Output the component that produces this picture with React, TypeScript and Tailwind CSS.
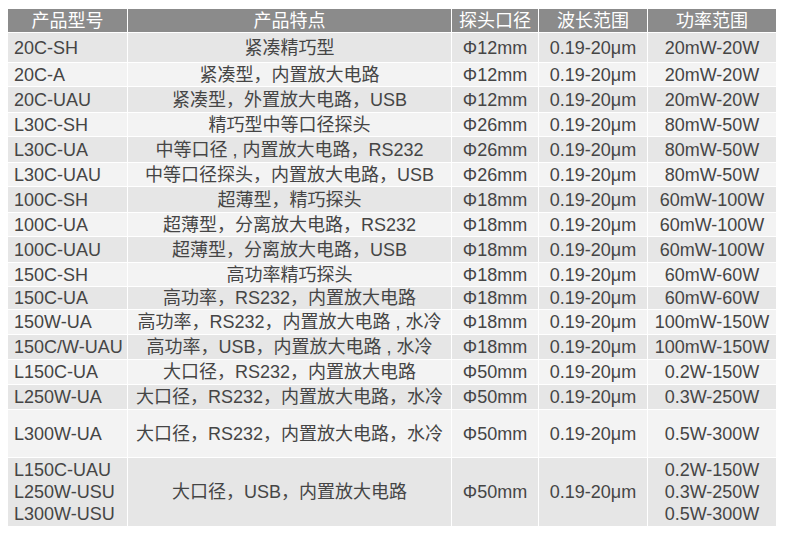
const headers = ['产品型号', '产品特点', '探头口径', '波长范围', '功率范围'];

type Row = {
  model: string[];
  feature: string;
  probe: string;
  wave: string;
  power: string[];
  h: string;
};

const rows: Row[] = [
  { model: ['20C-SH'], feature: '紧凑精巧型', probe: 'Φ12mm', wave: '0.19-20μm', power: ['20mW-20W'], h: 'h-[29px]' },
  { model: ['20C-A'], feature: '紧凑型，内置放大电路', probe: 'Φ12mm', wave: '0.19-20μm', power: ['20mW-20W'], h: 'h-[23px]' },
  { model: ['20C-UAU'], feature: '紧凑型，外置放大电路，USB', probe: 'Φ12mm', wave: '0.19-20μm', power: ['20mW-20W'], h: 'h-[25px]' },
  { model: ['L30C-SH'], feature: '精巧型中等口径探头', probe: 'Φ26mm', wave: '0.19-20μm', power: ['80mW-50W'], h: 'h-[23px]' },
  { model: ['L30C-UA'], feature: '中等口径 , 内置放大电路，RS232', probe: 'Φ26mm', wave: '0.19-20μm', power: ['80mW-50W'], h: 'h-[25px]' },
  { model: ['L30C-UAU'], feature: '中等口径探头，内置放大电路，USB', probe: 'Φ26mm', wave: '0.19-20μm', power: ['80mW-50W'], h: 'h-[23px]' },
  { model: ['100C-SH'], feature: '超薄型，精巧探头', probe: 'Φ18mm', wave: '0.19-20μm', power: ['60mW-100W'], h: 'h-[25px]' },
  { model: ['100C-UA'], feature: '超薄型，分离放大电路，RS232', probe: 'Φ18mm', wave: '0.19-20μm', power: ['60mW-100W'], h: 'h-[23px]' },
  { model: ['100C-UAU'], feature: '超薄型，分离放大电路，USB', probe: 'Φ18mm', wave: '0.19-20μm', power: ['60mW-100W'], h: 'h-[25px]' },
  { model: ['150C-SH'], feature: '高功率精巧探头', probe: 'Φ18mm', wave: '0.19-20μm', power: ['60mW-60W'], h: 'h-[23px]' },
  { model: ['150C-UA'], feature: '高功率，RS232，内置放大电路', probe: 'Φ18mm', wave: '0.19-20μm', power: ['60mW-60W'], h: 'h-[22px]' },
  { model: ['150W-UA'], feature: '高功率，RS232，内置放大电路 , 水冷', probe: 'Φ18mm', wave: '0.19-20μm', power: ['100mW-150W'], h: 'h-[24px]' },
  { model: ['150C/W-UAU'], feature: '高功率，USB，内置放大电路 , 水冷', probe: 'Φ18mm', wave: '0.19-20μm', power: ['100mW-150W'], h: 'h-[24px]' },
  { model: ['L150C-UA'], feature: '大口径，RS232，内置放大电路', probe: 'Φ50mm', wave: '0.19-20μm', power: ['0.2W-150W'], h: 'h-[24px]' },
  { model: ['L250W-UA'], feature: '大口径，RS232，内置放大电路，水冷', probe: 'Φ50mm', wave: '0.19-20μm', power: ['0.3W-250W'], h: 'h-[24px]' },
  { model: ['L300W-UA'], feature: '大口径，RS232，内置放大电路，水冷', probe: 'Φ50mm', wave: '0.19-20μm', power: ['0.5W-300W'], h: 'h-[47px]' },
  {
    model: ['L150C-UAU', 'L250W-USU', 'L300W-USU'],
    feature: '大口径，USB，内置放大电路',
    probe: 'Φ50mm',
    wave: '0.19-20μm',
    power: ['0.2W-150W', '0.3W-250W', '0.5W-300W'],
    h: 'h-[68px]',
  },
];

const widths = ['w-[119px]', 'w-[323px]', 'w-[86px]', 'w-[108px]', 'w-[128px]'];

export default function App() {
  return (
    <div
      className="min-h-[535px] w-[786px] bg-white pl-2 pt-[9px]"
      style={{ fontFamily: '"Liberation Sans", "Noto Sans CJK SC", sans-serif' }}
    >
      <div className="flex w-[768px] flex-col gap-px text-[18px] text-[#454545]">
        {/* Header */}
        <div className="flex h-[23px] gap-px">
          {headers.map((t, i) => (
            <div
              key={t}
              className={`${widths[i]} flex items-center justify-center bg-[#8b8b8b] leading-none text-white`}
            >
              {t}
            </div>
          ))}
        </div>

        {rows.map((r, idx) => {
          const bg = idx % 2 === 0 ? 'bg-[#e6e6e6]' : 'bg-[#f3f3f3]';
          return (
            <div key={r.model.join()} className={`flex ${r.h} gap-px`}>
              <div className={`${widths[0]} ${bg} flex flex-col justify-center pl-1.5 leading-[22px]`}>
                {r.model.map((m) => (
                  <span key={m}>{m}</span>
                ))}
              </div>
              <div className={`${widths[1]} ${bg} flex items-center justify-center whitespace-nowrap leading-none`}>
                {r.feature}
              </div>
              <div className={`${widths[2]} ${bg} flex items-center justify-center leading-none`}>
                {r.probe}
              </div>
              <div className={`${widths[3]} ${bg} flex items-center justify-center leading-none`}>
                {r.wave}
              </div>
              <div className={`${widths[4]} ${bg} flex flex-col items-center justify-center leading-[22px]`}>
                {r.power.map((p) => (
                  <span key={p}>{p}</span>
                ))}
              </div>
            </div>
          );
        })}
      </div>
    </div>
  );
}
